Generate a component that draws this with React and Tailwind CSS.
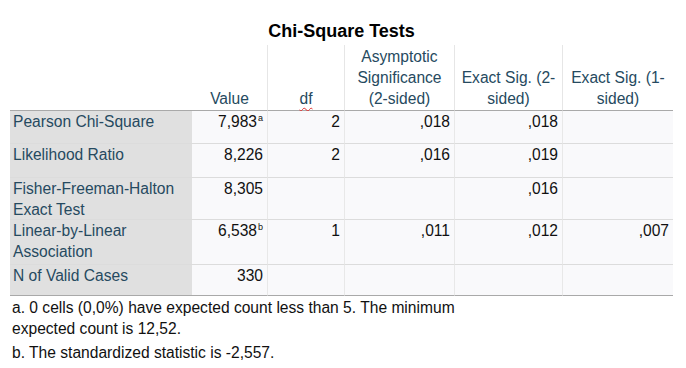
import React from "react";

const font = { fontFamily: '"Liberation Sans", Arial, sans-serif' };

const rows = [
  { label: ["Pearson Chi-Square"], h: "h-[33px]", v: ["7,983", "a"], df: "2", as: ",018", e2: ",018", e1: "" },
  { label: ["Likelihood Ratio"], h: "h-[34px]", v: ["8,226", ""], df: "2", as: ",016", e2: ",019", e1: "" },
  { label: ["Fisher-Freeman-Halton", "Exact Test"], h: "h-[42px]", v: ["8,305", ""], df: "", as: "", e2: ",016", e1: "" },
  { label: ["Linear-by-Linear", "Association"], h: "h-[45px]", v: ["6,538", "b"], df: "1", as: ",011", e2: ",012", e1: ",007" },
  { label: ["N of Valid Cases"], h: "h-[31px]", v: ["330", ""], df: "", as: "", e2: "", e1: "" },
];

function Hdr({ lines, last, children }) {
  return (
    <div
      className={
        "h-[66px] flex flex-col justify-end items-center text-center leading-[21px] pb-[1px] bg-white border-b border-[#a9a9a9] text-[#264a60] " +
        (last ? "" : "border-r border-r-[#e6e6e6]")
      }
    >
      {children ||
        lines.map((l, i) => (
          <div key={i} className="whitespace-nowrap">
            {l}
          </div>
        ))}
    </div>
  );
}

export default function App() {
  return (
    <div className="w-[686px] h-[368px] bg-white text-[15.6px] overflow-hidden" style={font}>
      <div className="pl-[10px] w-[673px]">
        <div className="pt-[18px] leading-[27px] h-[45px] text-center font-bold text-[18px] text-black">
          Chi-Square Tests
        </div>
        <div className="grid grid-cols-[182px_76px_77px_110px_108px_110px]">
          <div className="h-[66px] bg-white border-b border-[#a9a9a9]" />
          <Hdr lines={["Value"]} />
          <Hdr>
            <div className="underline decoration-wavy decoration-[#e03030] decoration-1 underline-offset-[3px]">df</div>
          </Hdr>
          <Hdr lines={["Asymptotic", "Significance", "(2-sided)"]} />
          <Hdr lines={["Exact Sig. (2-", "sided)"]} />
          <Hdr lines={["Exact Sig. (1-", "sided)"]} last />

          {rows.map((r, i) => {
            const last = i === rows.length - 1;
            const bb = last ? "border-b border-[#a9a9a9]" : "border-b border-[#dcdcdc]";
            const cell =
              r.h + " " + bb + " bg-[#f9f9fb] text-right pr-[4px] leading-[21px] text-[#111] ";
            return (
              <React.Fragment key={i}>
                <div className={r.h + " " + bb + " bg-[#e0e0e0] pl-[3px] leading-[21px] text-[#264a60]"}>
                  {r.label.map((l, j) => (
                    <div key={j} className="whitespace-nowrap">
                      {l}
                    </div>
                  ))}
                </div>
                <div className={cell + "border-r border-r-[#e8e8e8]"}>
                  {r.v[0]}
                  {r.v[1] && <sup className="text-[9px] -top-[6px] ml-[1px]">{r.v[1]}</sup>}
                </div>
                <div className={cell + "border-r border-r-[#e8e8e8]"}>{r.df}</div>
                <div className={cell + "border-r border-r-[#e8e8e8]"}>{r.as}</div>
                <div className={cell + "border-r border-r-[#e8e8e8]"}>{r.e2}</div>
                <div className={cell}>{r.e1}</div>
              </React.Fragment>
            );
          })}
        </div>
        <div className="pl-[2px] pt-[1px] text-[#111] leading-[21px]">
          <div className="w-[460px]">
            a. 0 cells (0,0%) have expected count less than 5. The minimum expected count is 12,52.
          </div>
          <div className="mt-[3px]">b. The standardized statistic is -2,557.</div>
        </div>
      </div>
    </div>
  );
}
